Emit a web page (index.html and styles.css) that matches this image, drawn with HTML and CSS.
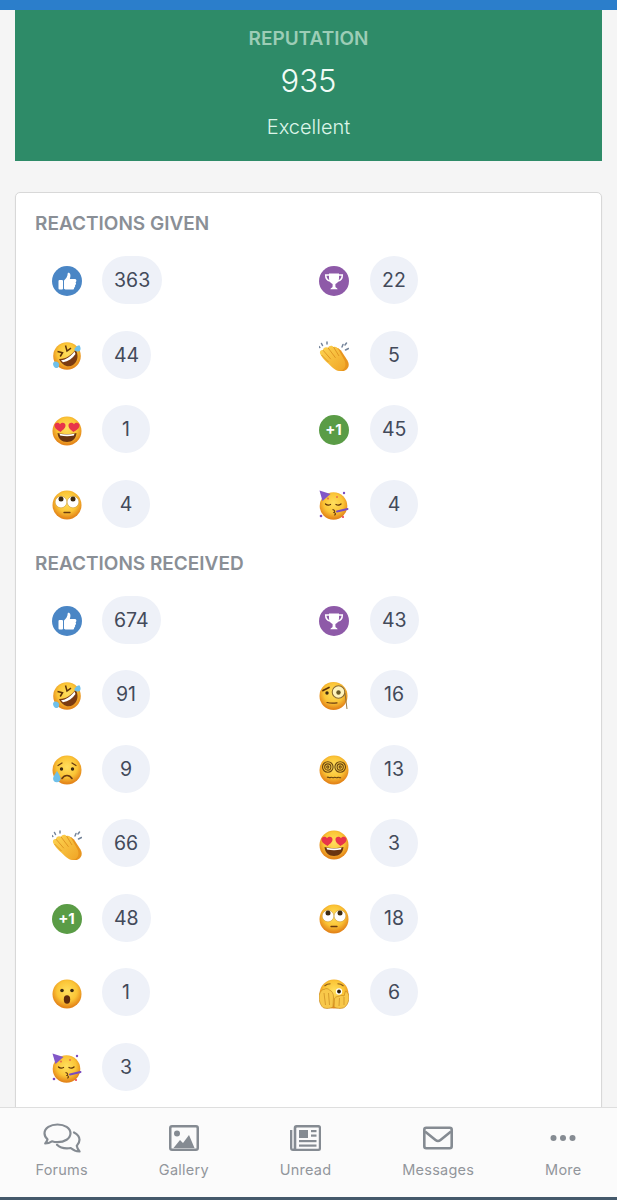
FILE: index.html
```html
<!DOCTYPE html>
<html lang="en">
<head>
<meta charset="utf-8">
<title>Reputation</title>
<link rel="stylesheet" href="styles.css">
</head>
<body>
<svg class="defs" aria-hidden="true">
  <defs>
    <radialGradient id="face" cx="50%" cy="40%" r="56%">
      <stop offset="0" stop-color="#ffdf5e"/><stop offset=".62" stop-color="#fbc536"/><stop offset="1" stop-color="#e4861a"/>
    </radialGradient>
    <linearGradient id="hand" x1="0" y1="0" x2="1" y2="1">
      <stop offset="0" stop-color="#fdd552"/><stop offset="1" stop-color="#f0a526"/>
    </linearGradient>
    <symbol id="like" viewBox="0 0 30 30">
      <circle cx="15" cy="15" r="15" fill="#4a86c5"/>
      <rect x="6.500" y="14" width="4.500" height="9.500" rx="1" fill="#fff"/>
      <path d="M12 14.500c2-2 3.600-4 3.800-7.600 2.400-.6 3.400 2.200 2 6.100h4.900c2 0 2.200 2.600.8 3.200.9 1 .6 2.400-.5 2.900.5 1.100.1 2.200-.9 2.600.2 1.200-.6 1.900-1.800 1.900h-5.500c-1.100 0-1.900-.4-2.800-.9z" fill="#fff"/>
    </symbol>
    <symbol id="trophy" viewBox="0 0 30 30">
      <circle cx="15" cy="15" r="15" fill="#8e5aa8"/>
      <path d="M10 7.500h10v5c0 3-2 5-3.600 5.500v2.500c0 1 1.600 1.300 2.300 2.700h-7.400c.7-1.400 2.300-1.700 2.300-2.700V18c-1.600-.5-3.600-2.500-3.600-5.500z" fill="#fff"/>
      <path d="M10 9H6.700c0 3.500 1.500 5.500 4.300 6M20 9h3.300c0 3.500-1.500 5.500-4.300 6" fill="none" stroke="#fff" stroke-width="1.500"/>
    </symbol>
    <symbol id="plus" viewBox="0 0 30 30">
      <circle cx="15" cy="15" r="15" fill="#5a9c46"/>
      <text class="plus-text" x="14.500" y="20.200" text-anchor="middle">+1</text>
    </symbol>
    <symbol id="rofl" viewBox="0 0 30 30">
      <circle cx="15" cy="15" r="13.800" fill="url(#face)"/>
      <path d="M7 18C13 18.500 20 14 23.500 8.500c3.500 5.500 2.500 12-2.500 15.500-5 3-11 .5-14-6z" fill="#7a3a12"/>
      <path d="M9 19.300c5-.5 10-4 13.500-8.800l1 2.500c-2.800 4.300-7.300 7.300-12.500 8.300z" fill="#fff"/>
      <path d="M5.500 10.500l5 1.200-2.300 3.800M13.500 4.500l1.500 5.500 4-2.800" fill="none" stroke="#5e3208" stroke-width="1.500"/>
      <path d="M2 21c2-1 4.500 0 5 2s-.5 4.500-3 4S0 22 2 21zM27.500 4.500c1 1 1.800 4.500 0 5.500s-4.500.5-5-1.200S26.500 3.500 27.500 4.500z" fill="#6fc0ea"/>
    </symbol>
    <symbol id="heart" viewBox="0 0 30 30">
      <circle cx="15" cy="15" r="14.500" fill="url(#face)"/>
      <path d="M5.500 17c5.500 1.500 13.500 1.500 19 0-.5 6-4.500 9-9.500 9s-9-3-9.500-9z" fill="#6a3410"/>
      <path d="M7.500 17.800c4.500.9 10.500.9 15 0l-.6 1.800c-4.500.9-9.300.9-13.800 0z" fill="#fff"/>
      <path d="M8.500 16c-2.500-1.800-6-3.500-6-6.500C2.500 6.500 6.500 6 8 8.300 9.800 6 13.500 6.500 13.500 9.500c0 3-3 4.500-5 6.500zM21.500 16c-2.500-2-5-3.500-5-6.500 0-3 3.700-3.500 5.500-1.200C23.500 6 27.500 6.500 27.500 9.500c0 3-3.500 4.700-6 6.500z" fill="#e8344a"/>
    </symbol>
    <symbol id="roll" viewBox="0 0 30 30">
      <circle cx="15" cy="15" r="14.500" fill="url(#face)"/>
      <circle cx="9" cy="12" r="5.800" fill="#fff" stroke="#b98028" stroke-width=".4"/>
      <circle cx="21" cy="12" r="5.800" fill="#fff" stroke="#b98028" stroke-width=".4"/>
      <circle cx="9" cy="9" r="2.500" fill="#3c2a12"/>
      <circle cx="21" cy="9" r="2.500" fill="#3c2a12"/>
      <path d="M12 22.500h6" stroke="#6a3b10" stroke-width="1.300" stroke-linecap="round"/>
    </symbol>
    <symbol id="clap" viewBox="0 0 30 30">
      <path d="M15 7l4 0 3 2.500 6.500 10c2.500 4.500 1 8-2.500 10-3 1.500-6 .5-8.500-1z" fill="#e8951e"/>
      <path d="M1.500 13.500C0 11 1.500 8.500 4 9.200 3.800 6.800 7 5.200 9 6.800c.8-2.200 4-2.700 5.500-.8 2-.8 3.500.3 4.500 1.800l6 10.700c2.500 4.500 1.500 8.500-1.200 10.300-3 2-6.500 1-9.500-1.500C10 23 4 18.500 1.500 13.500z" fill="url(#hand)"/>
      <path d="M4 9.200l7.800 9M9 6.800l7.500 10M2.500 14l7 7M14.500 6l5.500 9" stroke="#d98c1c" stroke-width=".8" fill="none"/>
      <path d="M3.500 4.500L2.500 2.500M8 3V1M.8 6.500L0 5.500" stroke="#74849a" stroke-width="1.500" stroke-linecap="round"/>
      <path d="M23 6l1-2.500M26.500 9l3-1.500M26 4l1.500-2" stroke="#74849a" stroke-width="1.500" stroke-linecap="round"/>
    </symbol>
    <symbol id="party" viewBox="0 0 30 30">
      <circle cx="14.500" cy="16" r="13.800" fill="url(#face)"/>
      <path d="M.5.500l11 3.500-8 7z" fill="#8257c8"/>
      <path d="M6.500 14c1.500 1.300 3.500 1.300 5 .5M17 14.500c1.500.8 3.500.8 5-.5" fill="none" stroke="#5e3208" stroke-width="1.300" stroke-linecap="round"/>
      <path d="M18 21.500l10.500-2.500" stroke="#7a4cc0" stroke-width="2" stroke-linecap="round"/>
      <path d="M13.500 19.500c2 .5 3 1.800 1.500 3 1.800.5 2 2 .3 2.800" fill="none" stroke="#6a3b10" stroke-width="1.100"/>
      <circle cx="2" cy="26" r="1.300" fill="#7a4cc0"/><circle cx="25" cy="3" r="1.200" fill="#7a4cc0"/>
      <circle cx="24" cy="27" r="1" fill="#e8344a"/><circle cx="18" cy="7" r="1" fill="#e8704a"/><circle cx="9" cy="8.500" r="1" fill="#e8704a"/>
    </symbol>
    <symbol id="monocle" viewBox="0 0 30 30">
      <circle cx="14.500" cy="15" r="14" fill="url(#face)"/>
      <circle cx="19.500" cy="11" r="6.300" fill="#fff3bc" stroke="#8a6a30" stroke-width="1.100"/>
      <circle cx="19.500" cy="11.500" r="2.200" fill="#6a5a28"/>
      <path d="M26 12c1 5 1 11 2 16" fill="none" stroke="#8a6a30" stroke-width=".9"/>
      <path d="M4 9.500l6-3" stroke="#5e3208" stroke-width="1.700" stroke-linecap="round"/>
      <circle cx="8" cy="12" r="1.700" fill="#3c2a12"/>
      <path d="M8 21.500c3 .8 6 1 10 .3" fill="none" stroke="#6a3b10" stroke-width="1.200" stroke-linecap="round"/>
    </symbol>
    <symbol id="sad" viewBox="0 0 30 30">
      <circle cx="15" cy="15" r="14.500" fill="url(#face)"/>
      <path d="M6 10.500l4-2.500M24 10.500L20 8" stroke="#6a3b10" stroke-width="1.300" stroke-linecap="round"/>
      <circle cx="9.500" cy="14" r="1.700" fill="#3c2a12"/><circle cx="20.500" cy="14" r="1.700" fill="#3c2a12"/>
      <path d="M10 23.500c2.500-4 7.500-4 10 0" fill="none" stroke="#6a3b10" stroke-width="1.600" stroke-linecap="round"/>
      <path d="M5 16c2 3 3.500 5.500 3.500 7.500a3.700 3.700 0 0 1-7.400 0C1.100 21.500 3 19 5 16z" fill="#6fc0ea"/>
    </symbol>
    <symbol id="dizzy" viewBox="0 0 30 30">
      <circle cx="15" cy="15" r="14.500" fill="url(#face)"/>
      <g fill="none" stroke="#6a4510" stroke-width="1.100">
        <circle cx="8.800" cy="12" r="5.300"/><circle cx="8.800" cy="12" r="3.100"/><circle cx="8.800" cy="12" r="1.100"/>
        <circle cx="21.200" cy="12" r="5.300"/><circle cx="21.200" cy="12" r="3.100"/><circle cx="21.200" cy="12" r="1.100"/>
        <path d="M8 22.500c1.500-1.300 2.300 1 3.500 0s2.300 1 3.500 0 2.300 1 3.500 0 2.300 1 3.500 0" stroke-width="1.200"/>
      </g>
    </symbol>
    <symbol id="wow" viewBox="0 0 30 30">
      <circle cx="15" cy="15" r="14.500" fill="url(#face)"/>
      <circle cx="10" cy="11.500" r="1.800" fill="#3c2a12"/><circle cx="20" cy="11.500" r="1.800" fill="#3c2a12"/>
      <ellipse cx="15" cy="20.500" rx="3.200" ry="4.200" fill="#5e2a0c"/>
    </symbol>
    <symbol id="peek" viewBox="0 0 30 30">
      <circle cx="15" cy="15" r="14.500" fill="url(#face)"/>
      <path d="M5.500 7c2-1.800 4-2.300 6-2.300M24.500 7c-2-1.800-4-2.300-6-2.300" fill="none" stroke="#8a5a18" stroke-width="1.100"/>
      <circle cx="20" cy="12.500" r="3.200" fill="#fff"/><circle cx="20" cy="12.500" r="1.900" fill="#2a1c08"/>
      <path d="M0 18c0-4 3-8 5-7.500 2-1.500 4-1 5.500.5 2.500 1 4 3.500 4 7l-.5 10c-3 2-9.500 2-11-.5C1 25 0 21 0 18z" fill="#f8c84a" stroke="#c98a20" stroke-width=".7"/>
      <path d="M30 18c0-3-2-5.500-3.500-6L25 17c-1-.5-3-1-4.500 0-3.500.5-5 1.500-5 3l-.5 8c3 2 9.500 2 11.500-.5C29 25 30 21 30 18z" fill="#f8c84a" stroke="#c98a20" stroke-width=".7"/>
      <path d="M5 14l1.500 12M9.500 14l1 12M20.500 19l-.5 8M25 18v8" stroke="#c98a20" stroke-width=".7"/>
    </symbol>
  </defs>
</svg>

<div class="topbar"></div>
<section class="rep">
  <div class="rep-label">REPUTATION</div>
  <div class="rep-value">935</div>
  <div class="rep-status">Excellent</div>
</section>

<main class="card">
  <h2 class="heading">REACTIONS GIVEN</h2>
  <div class="grid">
    <div class="item"><svg class="ic badge"><use href="#like"/></svg><span class="pill">363</span></div>
    <div class="item"><svg class="ic badge"><use href="#trophy"/></svg><span class="pill">22</span></div>
    <div class="item"><svg class="ic emoji"><use href="#rofl"/></svg><span class="pill">44</span></div>
    <div class="item"><svg class="ic emoji"><use href="#clap"/></svg><span class="pill">5</span></div>
    <div class="item"><svg class="ic emoji"><use href="#heart"/></svg><span class="pill">1</span></div>
    <div class="item"><svg class="ic badge"><use href="#plus"/></svg><span class="pill">45</span></div>
    <div class="item"><svg class="ic emoji"><use href="#roll"/></svg><span class="pill">4</span></div>
    <div class="item"><svg class="ic emoji"><use href="#party"/></svg><span class="pill">4</span></div>
  </div>
  <h2 class="heading second">REACTIONS RECEIVED</h2>
  <div class="grid">
    <div class="item"><svg class="ic badge"><use href="#like"/></svg><span class="pill">674</span></div>
    <div class="item"><svg class="ic badge"><use href="#trophy"/></svg><span class="pill">43</span></div>
    <div class="item"><svg class="ic emoji"><use href="#rofl"/></svg><span class="pill">91</span></div>
    <div class="item"><svg class="ic emoji"><use href="#monocle"/></svg><span class="pill">16</span></div>
    <div class="item"><svg class="ic emoji"><use href="#sad"/></svg><span class="pill">9</span></div>
    <div class="item"><svg class="ic emoji"><use href="#dizzy"/></svg><span class="pill">13</span></div>
    <div class="item"><svg class="ic emoji"><use href="#clap"/></svg><span class="pill">66</span></div>
    <div class="item"><svg class="ic emoji"><use href="#heart"/></svg><span class="pill">3</span></div>
    <div class="item"><svg class="ic badge"><use href="#plus"/></svg><span class="pill">48</span></div>
    <div class="item"><svg class="ic emoji"><use href="#roll"/></svg><span class="pill">18</span></div>
    <div class="item"><svg class="ic emoji"><use href="#wow"/></svg><span class="pill">1</span></div>
    <div class="item"><svg class="ic emoji"><use href="#peek"/></svg><span class="pill">6</span></div>
    <div class="item"><svg class="ic emoji"><use href="#party"/></svg><span class="pill">3</span></div>
  </div>
</main>

<nav class="nav">
  <a class="nav-item">
    <svg class="nav-ic" width="38" height="30" viewBox="0 0 38 30" fill="none" stroke="#858b92" stroke-width="2.200" stroke-linejoin="round" stroke-linecap="round">
      <path d="M14.500 1.500C7.500 1.500 1.500 5 1.500 10.300c0 2.500 1.300 4.500 3 6-.3 1.700-1.200 3-2.300 4.200 2.800 0 5-1 6.700-2.200 1.800.6 3.700.9 5.600.9 7 0 13-3.500 13-8.900S21.500 1.500 14.500 1.500z"/>
      <path d="M31 9.500c3.300 1.700 5.500 4 5.500 7.300 0 2.500-1.200 4.500-2.700 6 .3 2 1.300 3.800 2.700 5.700-3.500-.2-6.500-1.500-8.800-3.500-1.400.3-2.500.4-3.700.4-4 0-7.500-1.200-10-3.600"/>
    </svg>
    <span class="nav-label">Forums</span>
  </a>
  <a class="nav-item">
    <svg class="nav-ic" width="30" height="26" viewBox="0 0 30 26">
      <path d="M3 0h24a3 3 0 0 1 3 3v20a3 3 0 0 1-3 3H3a3 3 0 0 1-3-3V3a3 3 0 0 1 3-3zm0 2.500a.5.5 0 0 0-.5.5v20a.5.500 0 0 0 .5.500h24a.5.500 0 0 0 .5-.5V3a.5.500 0 0 0-.5-.5z" fill="#858b92"/>
      <circle cx="8" cy="8.500" r="3" fill="#858b92"/>
      <path d="M4.500 23l6.500-8 3 3 6-8 5.500 13z" fill="#858b92"/>
    </svg>
    <span class="nav-label">Gallery</span>
  </a>
  <a class="nav-item">
    <svg class="nav-ic" width="31" height="26" viewBox="0 0 31 26" fill="#858b92">
      <path d="M8 0h20.500A2.500 2.500 0 0 1 31 2.500v21a2.500 2.500 0 0 1-2.500 2.500H3a3 3 0 0 1-3-3V5h2.300v18a.7.700 0 0 0 1.400 0V3A3 3 0 0 1 6.500 0zm-1 2.500c-.5 0-.7.300-.7.700V23c0 .3 0 .5-.1.700h22.100c.3 0 .5-.2.500-.5v-20c0-.3-.2-.7-.5-.7z"/>
      <rect x="9" y="5" width="9" height="8"/>
      <rect x="21" y="5" width="5.500" height="2.200"/><rect x="21" y="9.500" width="5.500" height="2.200"/>
      <rect x="9" y="15" width="17.500" height="2.200"/><rect x="9" y="19.500" width="17.500" height="2.200"/>
    </svg>
    <span class="nav-label">Unread</span>
  </a>
  <a class="nav-item">
    <svg class="nav-ic" width="30" height="23" viewBox="0 0 30 23" fill="none" stroke="#858b92" stroke-width="2.600">
      <rect x="1.300" y="1.300" width="27.400" height="20.400" rx="2"/>
      <path d="M2 5l10.500 8.500c1.500 1.200 3.500 1.200 5 0L28 5" stroke-linejoin="round"/>
    </svg>
    <span class="nav-label">Messages</span>
  </a>
  <a class="nav-item">
    <svg class="nav-ic" width="26" height="7" viewBox="0 0 26 7" fill="#858b92">
      <circle cx="3.500" cy="3.500" r="3"/><circle cx="13" cy="3.500" r="3"/><circle cx="22.500" cy="3.500" r="3"/>
    </svg>
    <span class="nav-label">More</span>
  </a>
</nav>
<div class="strip"></div>
</body>
</html>
```

FILE: styles.css
```css
* { box-sizing: border-box; }
html, body { margin: 0; height: 1200px; overflow: hidden; }
body {
  position: relative;
  background: #f5f5f5;
  font-family: Inter, "Liberation Sans", sans-serif;
  color: #3a4150;
}
.defs { position: absolute; width: 0; height: 0; }

.topbar { height: 10px; background: #2b7ecb; }

.rep {
  margin: 0 15px;
  height: 151px;
  background: #2e8b68;
  text-align: center;
  padding-top: 18px;
}
.rep-label { font-size: 19px; line-height: 22px; font-weight: 600; color: #9ccdb6; }
.rep-value { font-size: 31px; line-height: 38px; margin-top: 12px; color: #f1fbf6; font-weight: 300; }
.rep-status { font-size: 20px; line-height: 24px; margin-top: 15px; color: #dcf5e8; font-weight: 300; }

.card {
  margin: 31px 15px 0;
  height: 1000px;
  background: #fff;
  border: 1px solid #d8d8d8;
  border-radius: 5px;
  padding: 20px 19px 0;
  box-shadow: 0 1px 2px rgba(0,0,0,.05);
}
.heading {
  margin: 0;
  font-size: 19px;
  line-height: 22px;
  font-weight: 600;
  color: #8a8f96;
}
.second { margin-top: 25px; }

.grid {
  display: grid;
  grid-template-columns: 267px 1fr;
  row-gap: 26.5px;
  margin-top: 21px;
}
.item { display: flex; align-items: center; padding-left: 17px; height: 48px; }
.ic { width: 30px; height: 30px; flex: none; margin-right: 20px; overflow: visible; }
.badge { margin-top: 2px; }
.emoji { margin-top: 3px; }
.item:nth-child(even) .ic { margin-right: 21px; }
.plus-text { font-family: Inter, sans-serif; font-size: 15px; font-weight: 700; fill: #fff; }
.pill {
  min-width: 48px;
  height: 48px;
  padding: 0 12px;
  border-radius: 24px;
  background: #eef1f8;
  display: flex;
  align-items: center;
  justify-content: center;
  font-size: 19.500px;
  font-weight: 400;
  color: #434a5a;
}

.nav {
  position: absolute;
  left: 0;
  right: 0;
  top: 1107px;
  height: 90px;
  background: #fbfbfb;
  border-top: 1px solid #dedede;
  display: flex;
  justify-content: space-around;
}
.nav-item { display: flex; flex-direction: column; align-items: center; }
.nav-ic { height: 30px; margin-top: 15px; }
.nav-label {
  margin-top: 7px;
  font-size: 14.500px;
  line-height: 20px;
  color: #92969c;
  letter-spacing: .25px;
}
.strip { position: absolute; left: 0; right: 0; top: 1197px; height: 3px; background: #44596b; }
```
